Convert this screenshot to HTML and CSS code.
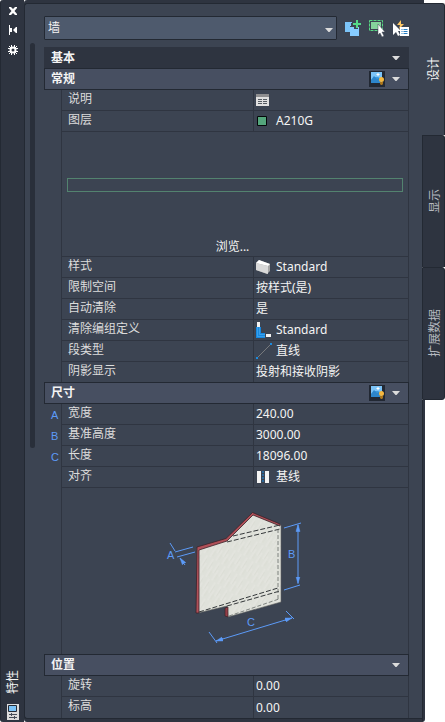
FILE: index.html
```html
<!DOCTYPE html>
<html lang="zh-CN">
<head>
<meta charset="utf-8">
<title>特性</title>
<link rel="stylesheet" href="styles.css">
</head>
<body>
<svg class="defs" aria-hidden="true">
  <symbol id="arrow" viewBox="0 0 8 4"><path d="M0 0h8L4.500 4h-1z" fill="#dcdcdc"/></symbol>
  <symbol id="picture" viewBox="0 0 16 16">
    <path d="M0 0h16v16H0z" fill="#222833"/>
    <path d="M2 1h11v11H2z" fill="#3d9be0"/>
    <path d="M2 1h11v5l-2 1-2-1-3 0-2 2-2 1z" fill="#7cc4f8"/>
    <path d="M2 9l3-4 3 3 2-1 3 3v2H2z" fill="#2d86cc"/>
    <path d="M9 2v3M7.500 3.500h3" stroke="#fff" stroke-width="1"/>
    <circle cx="12.500" cy="8.500" r="2.500" fill="#f5b840"/>
    <path d="M11 11h3v2l-1 1h-1l-1-1z" fill="#a8741c"/>
  </symbol>
</svg>
<div class="window">
  <aside class="titlebar">
    <button class="tool" type="button" aria-label="关闭"><svg width="8" height="8" viewBox="0 0 8 8"><path d="M0 0h2l2 2 2-2h2v1L5.500 4 8 7v1H6L4 6 2 8H0V7l2.500-3L0 1z" fill="#fff"/></svg></button>
    <button class="tool" type="button" aria-label="自动隐藏"><svg width="8" height="10" viewBox="0 0 8 10"><path d="M0 0h1v10H0zM1 3h2v4H1zM8 2v6H7L4 5l3-3z" fill="#fff"/></svg></button>
    <button class="tool" type="button" aria-label="设置"><svg width="10" height="10" viewBox="0 0 10 10"><circle cx="5" cy="5" r="2.500" fill="none" stroke="#fff" stroke-width="2"/><path d="M3.500 0v3M6.500 0v3M3.500 7v3M6.500 7v3M0 3.500h3M0 6.500h3M7 3.500h3M7 6.500h3M1 1l2 2M9 1L7 3M1 9l2-2M9 9L7 7" stroke="#fff"/></svg></button>
    <span class="caption sideways">特性</span>
    <svg class="logo" width="12" height="16" viewBox="0 0 12 16"><path d="M0 0h12v16H0z" fill="#dcdcdc"/><path d="M1.500 1.500h8v6h-8z" fill="#7cc4f8" stroke="#252b36"/><path d="M2 10.500h8M2 13.500h8M4.500 9v3M7.500 12v3" stroke="#454c58"/></svg>
  </aside>

  <main class="panel">
    <div class="toolbar">
      <label class="picker">
        <select aria-label="对象类型"><option>墙</option></select>
        <svg class="picker-arrow" width="8" height="4"><use href="#arrow"/></svg>
      </label>
      <div class="actions">
        <button class="tool" type="button" aria-label="切换选择"><svg width="17" height="17" viewBox="0 0 17 17"><path d="M0 2h7v4H5v6H0z" fill="#7cc4f8"/><path d="M5 7h9v9H5z" fill="#86ccff"/><path d="M9 0h4v3h3v3h-3v3H9V6H6V3h3z" fill="#3c4452"/><path d="M11 0h2v3h3v2h-3v3h-2V5H8V3h3z" fill="#55d888"/></svg></button>
        <button class="tool" type="button" aria-label="选择对象"><svg width="17" height="17" viewBox="0 0 17 17"><path d="M.5 .5h13v10H.5z" fill="none" stroke="#58d985" stroke-dasharray="3 1"/><path d="M2 2h10v7H2z" fill="#85d49c"/><path d="M9 4v11l2-2 2 4 2-1-2-4h3z" fill="#fff" stroke="#3c4452" stroke-width=".5"/></svg></button>
        <button class="tool" type="button" aria-label="快速选择"><svg width="17" height="17" viewBox="0 0 17 17"><path d="M8 0L4 5h3L6 9l5-5H8z" fill="#ffc864"/><path d="M0 3v12l3-3 2 4 2-1-2-4h3z" fill="#fff"/><path d="M7 7h9v9H7z" fill="#fff"/><path d="M8.500 9.500h1m1 0h4m-6 2h1m1 0h4m-6 2h1m1 0h4" stroke="#277fc4"/></svg></button>
      </div>
    </div>

    <div class="content">
      <div class="scroll"></div>
      <div class="sections">
        <h2 class="head group"><span>基本</span><button class="tool" type="button" aria-label="折叠基本"><svg width="8" height="4"><use href="#arrow"/></svg></button></h2>

        <h3 class="head"><span>常规</span><button class="tool" type="button" aria-label="示意图"><svg width="16" height="16"><use href="#picture"/></svg></button><button class="tool" type="button" aria-label="折叠常规"><svg width="8" height="4"><use href="#arrow"/></svg></button></h3>
        <table>
          <tr><td class="key"></td><th scope="row">说明</th><td><div class="value"><svg width="14" height="12" viewBox="0 0 14 12"><path d="M0 0h13v12H0z" fill="#e0e0e0"/><path d="M0 0h13v3H0z" fill="#8e8e90"/><path d="M2 5.500h4m1 0h4m-9 2h4m1 0h4m-9 2h4m1 0h4" stroke="#555b62"/></svg></div></td></tr>
          <tr><td class="key"></td><th scope="row">图层</th><td><div class="value"><svg width="14" height="12" viewBox="0 0 14 12"><path d="M1.500 1.500h9v9h-9z" fill="#54a67c" stroke="#05080a"/></svg>A210G</div></td></tr>
          <tr><td class="key"></td><td class="wide" colspan="2"><div class="preview"><div class="shape"></div><button class="tool browse" type="button">浏览...</button></div></td></tr>
          <tr><td class="key"></td><th scope="row">样式</th><td><div class="value"><svg width="14" height="16" viewBox="0 0 14 16"><path d="M0 4l3-3 11 4v7l-3 3-11-4z" fill="#a6a6a6"/><path d="M0 4l3-3 11 4-2 2z" fill="#fff"/><path d="M0 4l12 3v8L0 11z" fill="#d9d9d9"/></svg>Standard</div></td></tr>
          <tr><td class="key"></td><th scope="row">限制空间</th><td><div class="value">按样式(是)</div></td></tr>
          <tr><td class="key"></td><th scope="row">自动清除</th><td><div class="value">是</div></td></tr>
          <tr><td class="key"></td><th scope="row">清除编组定义</th><td><div class="value"><svg class="cleanup" width="16" height="16" viewBox="0 0 16 16"><path d="M0 5h5v6h4v5H0z" fill="#1688e0"/><path d="M1.500 5v9.500H9M3.500 5v7.500H9" fill="none" stroke="#5cb6f5" stroke-width=".5"/><path d="M1 0h3v5H1zM10 12h5v3h-5z" fill="#f2f2f2"/></svg>Standard</div></td></tr>
          <tr><td class="key"></td><th scope="row">段类型</th><td><div class="value"><svg class="segment" width="16" height="16" viewBox="0 0 16 16"><path d="M1 15L15 1" stroke="#77797c"/><path d="M0 14h2v2H0zM14 0h2v2h-2z" fill="#1b8be0"/></svg>直线</div></td></tr>
          <tr><td class="key"></td><th scope="row">阴影显示</th><td><div class="value">投射和接收阴影</div></td></tr>
        </table>

        <h3 class="head"><span>尺寸</span><button class="tool" type="button" aria-label="示意图"><svg width="16" height="16"><use href="#picture"/></svg></button><button class="tool" type="button" aria-label="折叠尺寸"><svg width="8" height="4"><use href="#arrow"/></svg></button></h3>
        <table>
          <tr><td class="key">A</td><th scope="row">宽度</th><td><div class="value">240.00</div></td></tr>
          <tr><td class="key">B</td><th scope="row">基准高度</th><td><div class="value">3000.00</div></td></tr>
          <tr><td class="key">C</td><th scope="row">长度</th><td><div class="value">18096.00</div></td></tr>
          <tr><td class="key"></td><th scope="row">对齐</th><td><div class="value"><svg width="14" height="12" viewBox="0 0 14 12"><path d="M1 0h4v12H1zM9 0h4v12H9z" fill="#f4f4f4"/><path d="M7 0v12" stroke="#1b8be0" stroke-dasharray="2 1"/></svg>基线</div></td></tr>
          <tr><td class="key"></td><td class="wide last" colspan="2">
            <svg class="diagram" width="150" height="167" viewBox="160 488 150 167">
              <defs>
                <pattern id="grain" width="7" height="19" patternUnits="userSpaceOnUse" patternTransform="rotate(32)">
                  <path d="M0 0h7v19H0z" fill="#dfe1da"/>
                  <path d="M1 0v12M4 7v12" stroke="#e9eae4" stroke-width=".7"/>
                  <path d="M2.500 3v8M6 11v6" stroke="#d6d8d1" stroke-width=".5"/>
                </pattern>
                <marker id="tip" viewBox="0 0 7 6" refX="7" refY="3" markerWidth="7" markerHeight="6" markerUnits="userSpaceOnUse" orient="auto-start-reverse"><path d="M0 1l7 2-7 2z" fill="#5c9bf8" stroke="#5c9bf8" stroke-width=".5"/></marker>
              </defs>
              <path d="M197 548L226 540 253 514 281 525V602L228 617 227 606 198 613z" fill="url(#grain)" stroke="#5e605e" stroke-width=".6"/>
              <path d="M197 547L226 538.500 252.500 512.500 280 524v2L253 515 227 541 199 550V613H196z" fill="#b05058" stroke="#3a2229" stroke-width=".8"/>
              <path d="M225 608l3-1v10l-3-1z" fill="#943e47" stroke="#3a2229" stroke-width=".7"/>
              <path d="M227 542L280 529M233 536L280 525M199 612L278 588M227 606L280 591" fill="none" stroke="#34383a" stroke-width="1" stroke-dasharray="5 2"/>
              <path d="M229 616L279 599M278 529V600" fill="none" stroke="#666b68" stroke-width=".8" stroke-dasharray="4 2"/>
              <g fill="none" stroke="#5c9bf8" stroke-width="1">
                <path d="M175 552l18-5M177 557l18-5M284 528l17-5M284 590l16-5M209 632l8 11M286 611l8 8"/>
                <path d="M298 524.500V583.500" marker-start="url(#tip)" marker-end="url(#tip)"/>
                <path d="M216 641L292 618" marker-start="url(#tip)" marker-end="url(#tip)"/>
                <path d="M170 543l5 8M185 565l-5-7" marker-end="url(#tip)"/>
              </g>
              <g class="dims"><text x="167" y="559">A</text><text x="288" y="558">B</text><text x="247" y="626">C</text></g>
            </svg>
          </td></tr>
        </table>

        <h3 class="head"><span>位置</span><button class="tool" type="button" aria-label="折叠位置"><svg width="8" height="4"><use href="#arrow"/></svg></button></h3>
        <table>
          <tr><td class="key"></td><th scope="row">旋转</th><td><div class="value">0.00</div></td></tr>
          <tr><td class="key"></td><th scope="row" class="last">标高</th><td class="last"><div class="value">0.00</div></td></tr>
        </table>
      </div>
    </div>
  </main>

  <nav class="side">
    <div class="corner"></div>
    <button class="tab active" type="button"><span class="sideways">设计</span></button>
    <button class="tab" type="button"><span class="sideways">显示</span></button>
    <button class="tab" type="button"><span class="sideways">扩展数据</span></button>
    <div class="edge"></div>
  </nav>
</div>
</body>
</html>
```
FILE: styles.css
```css
:root {
  --dark: #2e3440;
  --line: #232933;
  --rule: #2f3541;
  --panel: #3c4452;
  --head: #474f61;
  --text: #f4f4f4;
  --label: #dcdcdc;
  --blue: #5c9bf8;
}

* { box-sizing: border-box; }

body {
  margin: 0;
  background: #fff;
  color: var(--text);
  font: 12px/18px "Noto Sans", "Noto Sans CJK SC", sans-serif;
}

svg { display: block; flex: none; }

.defs { display: none; }

.tool {
  display: flex;
  padding: 0;
  border: 0;
  background: none;
  color: inherit;
  font: inherit;
}

.sideways {
  writing-mode: vertical-rl;
  text-orientation: sideways;
  transform: rotate(180deg);
}

.window {
  display: flex;
  min-height: 100vh;
}

/* Title strip */
.titlebar {
  display: flex;
  flex-direction: column;
  align-items: center;
  gap: 10px;
  width: 24px;
  padding: 7px 0 2px 1px;
  border-left: 1px solid var(--line);
  border-radius: 3px 0 0 3px;
  background: var(--dark);
}

.caption { margin-top: auto; }

/* Panel */
.panel {
  display: flex;
  flex: 1;
  flex-direction: column;
  min-width: 0;
  margin: 3px 0;
  padding-left: 5px;
  border: 1px solid var(--line);
  border-width: 1px 0 1px 1px;
  border-radius: 3px 0 0 3px;
  background: var(--panel);
  box-shadow: 0 -3px var(--dark), 0 3px var(--dark), -2px 0 var(--dark);
}

.toolbar {
  display: flex;
  align-items: center;
  gap: 8px;
  padding: 12px 12px 0 14px;
}

.picker {
  position: relative;
  flex: 1;
}

.picker select {
  display: block;
  width: 100%;
  height: 24px;
  padding: 0 3px;
  border: 1px solid var(--line);
  border-radius: 1px;
  appearance: none;
  background: #4e5a6d;
  color: var(--text);
  font: inherit;
}

.picker-arrow {
  position: absolute;
  top: 12px;
  right: 4px;
  pointer-events: none;
}

.actions {
  display: flex;
  gap: 7px;
}

.content {
  display: flex;
  flex: 1;
  gap: 9px;
  padding: 3px 13px 0 0;
}

.scroll {
  width: 5px;
  height: 60%;
  border-radius: 3px;
  background: #292f3a;
}

.sections {
  flex: 1;
  min-width: 0;
  padding-top: 4px;
}

.head {
  display: flex;
  align-items: center;
  gap: 7px;
  height: 22px;
  margin: -1px 0 0;
  padding: 0 8px 0 6px;
  border: 1px solid var(--line);
  background: var(--head);
  font-size: 12px;
  font-weight: 700;
}

.head span { flex: 1; }

.group {
  margin: 0;
  border-color: var(--dark);
  background: var(--dark);
}

/* Property grid */
table {
  width: 100%;
  border-spacing: 0;
  table-layout: fixed;
}

td, th {
  height: 21px;
  padding: 0;
  border: 0 solid var(--rule);
  border-width: 0 0 1px 1px;
  line-height: 18px;
}

th {
  width: 192px;
  padding-left: 6px;
  color: var(--label);
  font-weight: 400;
  text-align: left;
  vertical-align: top;
}

td:last-child { border-right-width: 1px; }

.key {
  width: 17px;
  padding-left: 7px;
  border: 0;
  color: var(--blue);
  font: 11px/18px "Liberation Sans", sans-serif;
}

.last,
td.last { border-bottom-width: 0; }

.value {
  display: flex;
  align-items: center;
  gap: 6px;
  height: 20px;
  padding-left: 2px;
}

.segment, .cleanup { margin-right: -2px; }

.preview {
  display: flex;
  flex-direction: column;
  align-items: center;
  justify-content: space-between;
  height: 124px;
  padding: 46px 5px 0;
}

.browse { padding-right: 5px; }

.shape {
  align-self: stretch;
  height: 14px;
  border: 1px solid #53836f;
}

.diagram { margin: 0 auto; }

.dims {
  fill: var(--blue);
  font: 11px "Liberation Sans", sans-serif;
}

/* Vertical tabs */
.side {
  display: flex;
  flex-direction: column;
  width: 23px;
}

.corner {
  width: 2px;
  height: 3px;
  background: var(--dark);
}

.tab {
  display: flex;
  align-items: center;
  justify-content: center;
  height: 132px;
  padding: 0 0 0 2px;
  border: 1px solid var(--line);
  border-bottom-width: 0;
  border-radius: 0 3px 0 0;
  background: var(--dark);
  color: #b4b8bf;
  font: inherit;
}

.tab:last-of-type {
  height: 133px;
  border-bottom-width: 1px;
  border-radius: 0 3px 3px 0;
}

.tab.active {
  border-left: 0;
  background: var(--panel);
  color: var(--text);
}

.edge {
  flex: 1;
  width: 3px;
  border-left: 1px solid var(--line);
  border-radius: 0 0 3px 0;
  background: var(--dark);
}
```
